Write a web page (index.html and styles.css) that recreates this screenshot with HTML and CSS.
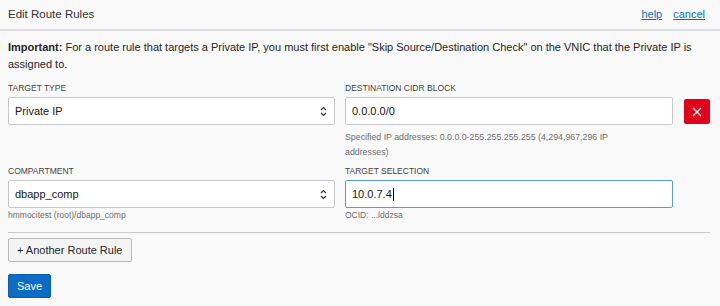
FILE: index.html
```html
<!DOCTYPE html>
<html>
<head>
<meta charset="utf-8">
<link rel="stylesheet" href="styles.css">
</head>
<body>
<header class="panel-header">
  <h1 class="panel-title">Edit Route Rules</h1>
  <nav class="panel-links"><a href="#">help</a><a href="#">cancel</a></nav>
</header>
<main class="panel-body">
  <p class="notice"><b>Important:</b> For a route rule that targets a Private IP, you must first enable "Skip Source/Destination Check" on the VNIC that the Private IP is assigned to.</p>
  <div class="rule-grid">
    <div class="field">
      <label class="field-label">TARGET TYPE</label>
      <div class="control select">Private IP
        <svg class="chev" width="7" height="11" viewBox="0 0 7 11"><path d="M1 4 L3.5 1.5 L6 4 M1 7 L3.5 9.5 L6 7" fill="none" stroke="#333" stroke-width="1.1"/></svg>
      </div>
    </div>
    <div class="field">
      <label class="field-label">DESTINATION CIDR BLOCK</label>
      <div class="control">0.0.0.0/0</div>
      <p class="help-text">Specified IP addresses: 0.0.0.0-255.255.255.255 (4,294,967,296 IP addresses)</p>
    </div>
    <div class="delete-cell">
      <button class="btn-delete" aria-label="remove">
        <svg width="10" height="10" viewBox="0 0 10 10"><path d="M1 1 L9 9 M9 1 L1 9" stroke="#fff" stroke-width="1.3"/></svg>
      </button>
    </div>
    <div class="field">
      <label class="field-label">COMPARTMENT</label>
      <div class="control select">dbapp_comp
        <svg class="chev" width="7" height="11" viewBox="0 0 7 11"><path d="M1 4 L3.5 1.5 L6 4 M1 7 L3.5 9.5 L6 7" fill="none" stroke="#333" stroke-width="1.1"/></svg>
      </div>
      <p class="path-text">hmmocitest (root)/dbapp_comp</p>
    </div>
    <div class="field">
      <label class="field-label">TARGET SELECTION</label>
      <div class="control focused">10.0.7.4<span class="caret"></span></div>
      <p class="path-text">OCID: ...lddzsa</p>
    </div>
  </div>
  <hr class="divider">
  <button class="btn-secondary">+ Another Route Rule</button>
  <div class="actions"><button class="btn-primary">Save</button></div>
</main>
</body>
</html>
```
FILE: styles.css
```css
* { box-sizing: border-box; }
body {
  margin: 0;
  background: #f9f9f9;
  font-family: "Liberation Sans", Arial, sans-serif;
  color: #252525;
}
.panel-header {
  height: 31px;
  display: flex;
  align-items: center;
  justify-content: space-between;
  padding: 0 15px 2px 8px;
  border-bottom: 2px solid #dadde1;
}
.panel-title {
  margin: 0;
  font-size: 11.5px;
  font-weight: normal;
  color: #333;
}
.panel-links { display: flex; gap: 11px; }
.panel-links a {
  font-size: 11px;
  color: #0a6bc4;
  text-decoration: underline;
}
.panel-body { padding: 8px 10px 0 8px; }
.notice {
  margin: 0;
  font-size: 11px;
  line-height: 17px;
  color: #252525;
}
.notice b { font-weight: bold; }
.rule-grid {
  display: grid;
  grid-template-columns: 327px 328px 26px;
  column-gap: 10px;
  row-gap: 5px;
  margin-top: 9px;
}
.field { display: flex; flex-direction: column; }
.field-label {
  font-size: 8.5px;
  line-height: 12px;
  color: #444;
  margin-bottom: 3px;
}
.control {
  height: 28px;
  background: #fff;
  border: 1px solid #c4c8cc;
  border-radius: 2px;
  font-size: 11px;
  line-height: 26px;
  padding: 0 6px;
  color: #161513;
  display: flex;
  align-items: center;
}
.select { justify-content: space-between; padding-right: 7px; }
.chev { flex: none; }
.focused { border-color: #5b9bd5; }
.caret {
  display: inline-block;
  width: 1px;
  height: 13px;
  background: #000;
  margin-left: 1px;
}
.help-text {
  margin: 5px 0 0;
  max-width: 290px;
  font-size: 8.8px;
  line-height: 15px;
  color: #6d6d6d;
}
.path-text {
  margin: 2px 0 0;
  font-size: 8.5px;
  line-height: 11px;
  color: #6d6d6d;
}
.delete-cell { padding-top: 17px; padding-left: 1px; }
.btn-delete {
  width: 26px;
  height: 25px;
  border: 0;
  border-radius: 2px;
  background: #e2001b;
  display: flex;
  align-items: center;
  justify-content: center;
  padding: 0;
}
.divider {
  margin: 11px 0 5px;
  border: 0;
  border-top: 1px solid #c8c8c8;
}
.btn-secondary {
  height: 24px;
  padding: 0 8px;
  background: #f4f4f4;
  border: 1px solid #b9b9b9;
  border-radius: 2px;
  font-family: inherit;
  font-size: 11px;
  color: #252525;
}
.actions { margin-top: 12px; }
.btn-primary {
  height: 24px;
  padding: 0 8px;
  background: #0a6cc4;
  border: 1px solid #0a5fad;
  border-radius: 2px;
  font-family: inherit;
  font-size: 11px;
  color: #fff;
}
```
